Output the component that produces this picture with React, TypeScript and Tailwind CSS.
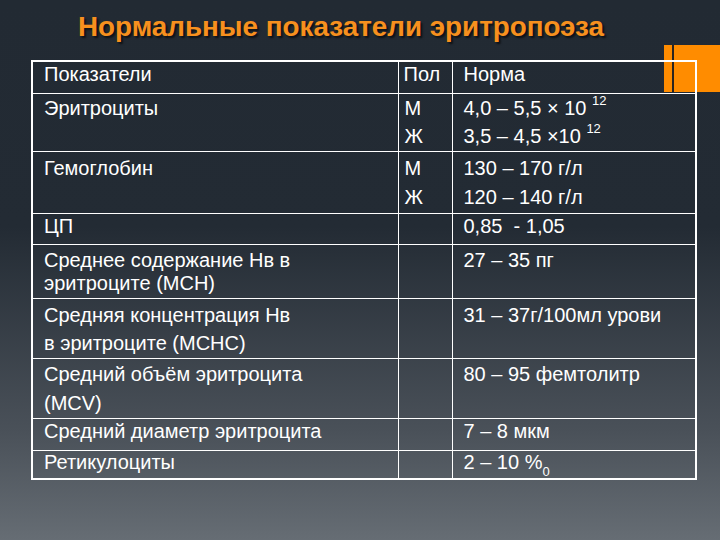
export default function App() {
  const cell = "border border-white align-top text-white";
  return (
    <div
      className="relative w-[720px] h-[540px] overflow-hidden bg-[linear-gradient(180deg,#222a33_0%,#232b34_42%,#4a5159_80%,#666d74_100%)]"
      style={{ fontFamily: '"Liberation Sans", Arial, sans-serif' }}
    >
      {/* orange corner block */}
      <div className="absolute left-[664px] top-[45px] w-[56px] h-[47px] bg-[#ff8c00]">
        <div className="absolute left-[8px] top-0 w-[2px] h-full bg-[#2a2420]" />
      </div>

      <h1 className="pl-[78px] pt-[9px] h-[60px] text-[27.8px] leading-[36px] font-bold text-[#f7901e] [text-shadow:2px_2px_2px_rgba(0,0,0,0.6)]">
        Нормальные показатели эритропоэза
      </h1>

      <table className="relative ml-[31px] w-[664px] border-collapse border-2 border-white text-[20px] table-fixed">
        <colgroup>
          <col className="w-[366px]" />
          <col className="w-[54px]" />
          <col className="w-[244px]" />
        </colgroup>
        <tbody>
          <tr className="h-[32px] leading-[24px]">
            <td className={`${cell} pl-[11px] align-middle`}>Показатели</td>
            <td className={`${cell} pl-[5px] align-middle`}>Пол</td>
            <td className={`${cell} pl-[11px] align-middle`}>Норма</td>
          </tr>
          <tr className="h-[58px] leading-[28px]">
            <td className={`${cell} pl-[11px]`}>Эритроциты</td>
            <td className={`${cell} pl-[6px]`}>
              <div>М</div>
              <div>Ж</div>
            </td>
            <td className={`${cell} pl-[11px]`}>
              <div>
                4,0 – 5,5 × 10 <sup className="text-[13px] leading-none align-[3px]">12</sup>
              </div>
              <div>
                3,5 – 4,5 ×10 <sup className="text-[13px] leading-none align-[3px]">12</sup>
              </div>
            </td>
          </tr>
          <tr className="h-[62px] leading-[29px]">
            <td className={`${cell} pl-[11px] pt-[2px]`}>Гемоглобин</td>
            <td className={`${cell} pl-[6px] pt-[2px]`}>
              <div>М</div>
              <div>Ж</div>
            </td>
            <td className={`${cell} pl-[11px] pt-[2px]`}>
              <div>130 – 170 г/л</div>
              <div>120 – 140 г/л</div>
            </td>
          </tr>
          <tr className="h-[31px] leading-[24px]">
            <td className={`${cell} pl-[11px] align-middle`}>ЦП</td>
            <td className={cell}></td>
            <td className={`${cell} pl-[11px] align-middle`}>0,85&nbsp; - 1,05</td>
          </tr>
          <tr className="h-[54px] leading-[23px]">
            <td className={`${cell} pl-[11px] pt-[4px]`}>
              Среднее содержание Нв в
              <br />
              эритроците (МСН)
            </td>
            <td className={cell}></td>
            <td className={`${cell} pl-[11px] pt-[4px]`}>27 – 35 пг</td>
          </tr>
          <tr className="h-[60px] leading-[28px]">
            <td className={`${cell} pl-[11px] pt-[2px]`}>
              Средняя концентрация Нв
              <br />в эритроците (МСНС)
            </td>
            <td className={cell}></td>
            <td className={`${cell} pl-[11px] pt-[2px]`}>31 – 37г/100мл урови</td>
          </tr>
          <tr className="h-[60px] leading-[29px]">
            <td className={`${cell} pl-[11px] pt-px`}>
              Средний объём эритроцита
              <br />
              (МСV)
            </td>
            <td className={cell}></td>
            <td className={`${cell} pl-[11px] pt-px`}>80 – 95 фемтолитр</td>
          </tr>
          <tr className="h-[32px] leading-[24px]">
            <td className={`${cell} pl-[11px] align-middle`}>Средний диаметр эритроцита</td>
            <td className={cell}></td>
            <td className={`${cell} pl-[11px] align-middle`}>7 – 8 мкм</td>
          </tr>
          <tr className="h-[29px] leading-[22px]">
            <td className={`${cell} pl-[11px] align-middle`}>Ретикулоциты</td>
            <td className={cell}></td>
            <td className={`${cell} pl-[11px] align-middle`}>
              2 – 10 %<sub className="text-[13px] leading-none align-[-4px]">0</sub>
            </td>
          </tr>
        </tbody>
      </table>
    </div>
  );
}
